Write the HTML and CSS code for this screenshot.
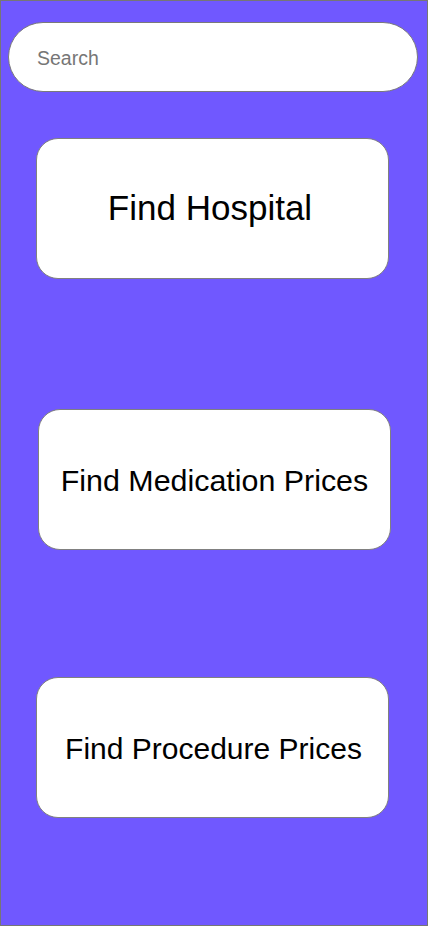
FILE: index.html
```html
<!DOCTYPE html>
<html lang="en">
<head>
<meta charset="utf-8">
<title>Find Care</title>
<link rel="stylesheet" href="styles.css">
</head>
<body>
<div class="screen">
  <div class="search">
    <input class="search-input" type="text" placeholder="Search">
  </div>
  <button class="card card-hospital">Find Hospital</button>
  <button class="card card-medication">Find Medication Prices</button>
  <button class="card card-procedure">Find Procedure Prices</button>
</div>
</body>
</html>
```
FILE: styles.css
```css
* { box-sizing: border-box; }
html, body { margin: 0; padding: 0; }
body {
  font-family: "Liberation Sans", Arial, sans-serif;
  background: #ffffff;
}
.screen {
  width: 428px;
  height: 926px;
  background: #7058ff;
  border: 1px solid #767676;
  display: flex;
  flex-direction: column;
  align-items: flex-start;
}
.search {
  margin: 21px 0 0 7px;
  width: 410px;
  height: 70px;
  background: #ffffff;
  border: 1px solid #7a7a7a;
  border-radius: 35px;
  display: flex;
  align-items: center;
  padding: 2px 0 0 28px;
}
.search-input {
  border: none;
  outline: none;
  background: transparent;
  font-family: "Liberation Sans", Arial, sans-serif;
  font-size: 19.5px;
  color: #333;
  width: 100%;
  padding: 0;
}
.search-input::placeholder { color: #767676; }
.card {
  width: 353px;
  height: 141px;
  background: #ffffff;
  border: 1px solid #808080;
  border-radius: 22px;
  display: flex;
  align-items: center;
  justify-content: center;
  font-family: "Liberation Sans", Arial, sans-serif;
  color: #000;
  padding: 0;
  cursor: pointer;
}
.card-hospital {
  margin: 46px 0 0 35px;
  font-size: 35px;
  padding: 0 5px 2px 0;
}
.card-medication {
  margin: 130px 0 0 37px;
  font-size: 30.4px;
  padding-top: 2px;
}
.card-procedure {
  margin: 127px 0 0 35px;
  font-size: 30px;
  padding: 2px 0 0 2px;
}
```
